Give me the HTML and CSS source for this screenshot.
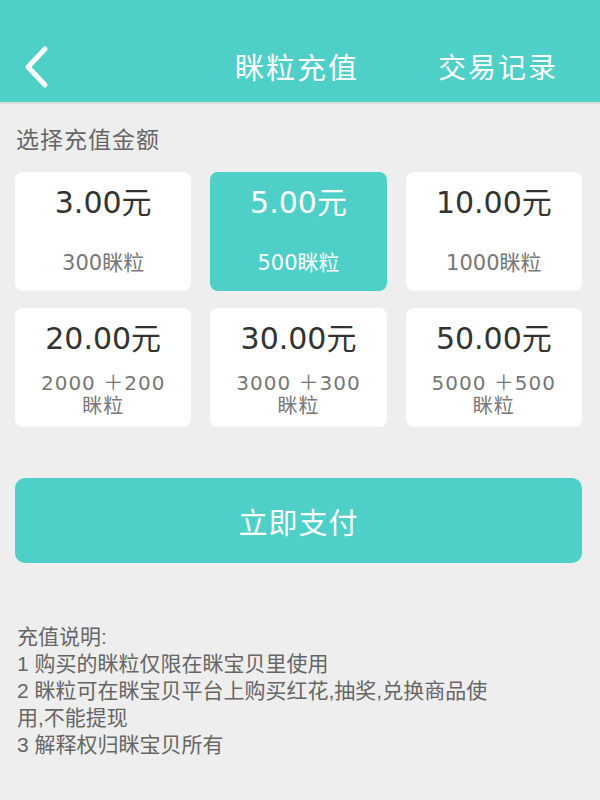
FILE: index.html
```html
<!DOCTYPE html>
<html lang="zh-CN">
<head>
    <meta charset="utf-8">
    <title>眯粒充值</title>
    <link rel="stylesheet" href="styles.css">
</head>
<body>

<div class="header">
    <a class="back" href="#">
        <svg width="30" height="44" viewBox="0 0 30 44">
            <polyline points="22,4 5,22 22,40" fill="none" stroke="#fff" stroke-width="5" stroke-linecap="round" stroke-linejoin="round"/>
        </svg>
    </a>
    <div class="title">眯粒充值</div>
    <a class="record" href="#">交易记录</a>
</div>

<div class="label">选择充值金额</div>

<div class="grid">
    <div class="card">
        <div class="amount">3.00元</div>
        <div class="sub">300眯粒</div>
    </div>
    <div class="card active">
        <div class="amount">5.00元</div>
        <div class="sub">500眯粒</div>
    </div>
    <div class="card">
        <div class="amount">10.00元</div>
        <div class="sub">1000眯粒</div>
    </div>
    <div class="card bonus">
        <div class="amount">20.00元</div>
        <div class="sub">2000 ＋200<br>眯粒</div>
    </div>
    <div class="card bonus">
        <div class="amount">30.00元</div>
        <div class="sub">3000 ＋300<br>眯粒</div>
    </div>
    <div class="card bonus">
        <div class="amount">50.00元</div>
        <div class="sub">5000 ＋500<br>眯粒</div>
    </div>
</div>

<div class="pay">立即支付</div>

<div class="notes">
    充值说明:<br>
    1 购买的眯粒仅限在眯宝贝里使用<br>
    2 眯粒可在眯宝贝平台上购买红花,抽奖,兑换商品使用,不能提现<br>
    3 解释权归眯宝贝所有
</div>

</body>
</html>
```

FILE: styles.css
```css
BODY {
    margin : 0;
    background-color : #eeeeee;
    font-family : "Liberation Sans", "Noto Sans CJK SC", sans-serif;
    color : #333;
}
A {
    color : #fff;
    text-decoration : none;
}

.header {
    height : 104px;
    background-color : #4ecfc7;
    border-bottom : 2px solid #dcdcdc;
    display : flex;
    align-items : center;
    padding-top : 30px;
    box-sizing : border-box;
}
.back {
    display : flex;
    width : 209px;
    padding-left : 23px;
    padding-top : 2px;
}
.title {
    font-size : 29px;
    color : #fff;
    letter-spacing : 2px;
    margin-left : 3px;
}
.record {
    font-size : 28px;
    margin-left : auto;
    margin-right : 42px;
    letter-spacing : 2px;
}

.label {
    font-size : 23px;
    letter-spacing : 1px;
    color : #666;
    padding : 17px 16px 0;
    height : 51px;
}

.grid {
    display : grid;
    grid-template-columns : repeat(3, 1fr);
    column-gap : 19px;
    row-gap : 17px;
    padding : 0 18px 0 15px;
    font-family : "DejaVu Sans", "Noto Sans CJK SC", sans-serif;
}
.card {
    background-color : #fff;
    border-radius : 8px;
    height : 119px;
    text-align : center;
    box-sizing : border-box;
    padding-top : 11px;
}
.amount {
    font-size : 30px;
    line-height : 40px;
    color : #333;
}
.sub {
    font-size : 21px;
    color : #777;
    margin-top : 29px;
    line-height : 23px;
}
.bonus .sub {
    margin-top : 13px;
    font-size : 20px;
    letter-spacing : 1px;
}
.card.active {
    background-color : #4ecfc7;
}
.active .amount, .active .sub {
    color : #fff;
}

.pay {
    margin : 51px 18px 0 15px;
    height : 85px;
    border-radius : 10px;
    background-color : #4ecfc7;
    color : #fff;
    font-size : 29px;
    letter-spacing : 1px;
    display : flex;
    align-items : center;
    justify-content : center;
}

.notes {
    margin : 60px 0 0 17px;
    width : 490px;
    font-size : 21px;
    line-height : 27px;
    color : #666;
}
```
